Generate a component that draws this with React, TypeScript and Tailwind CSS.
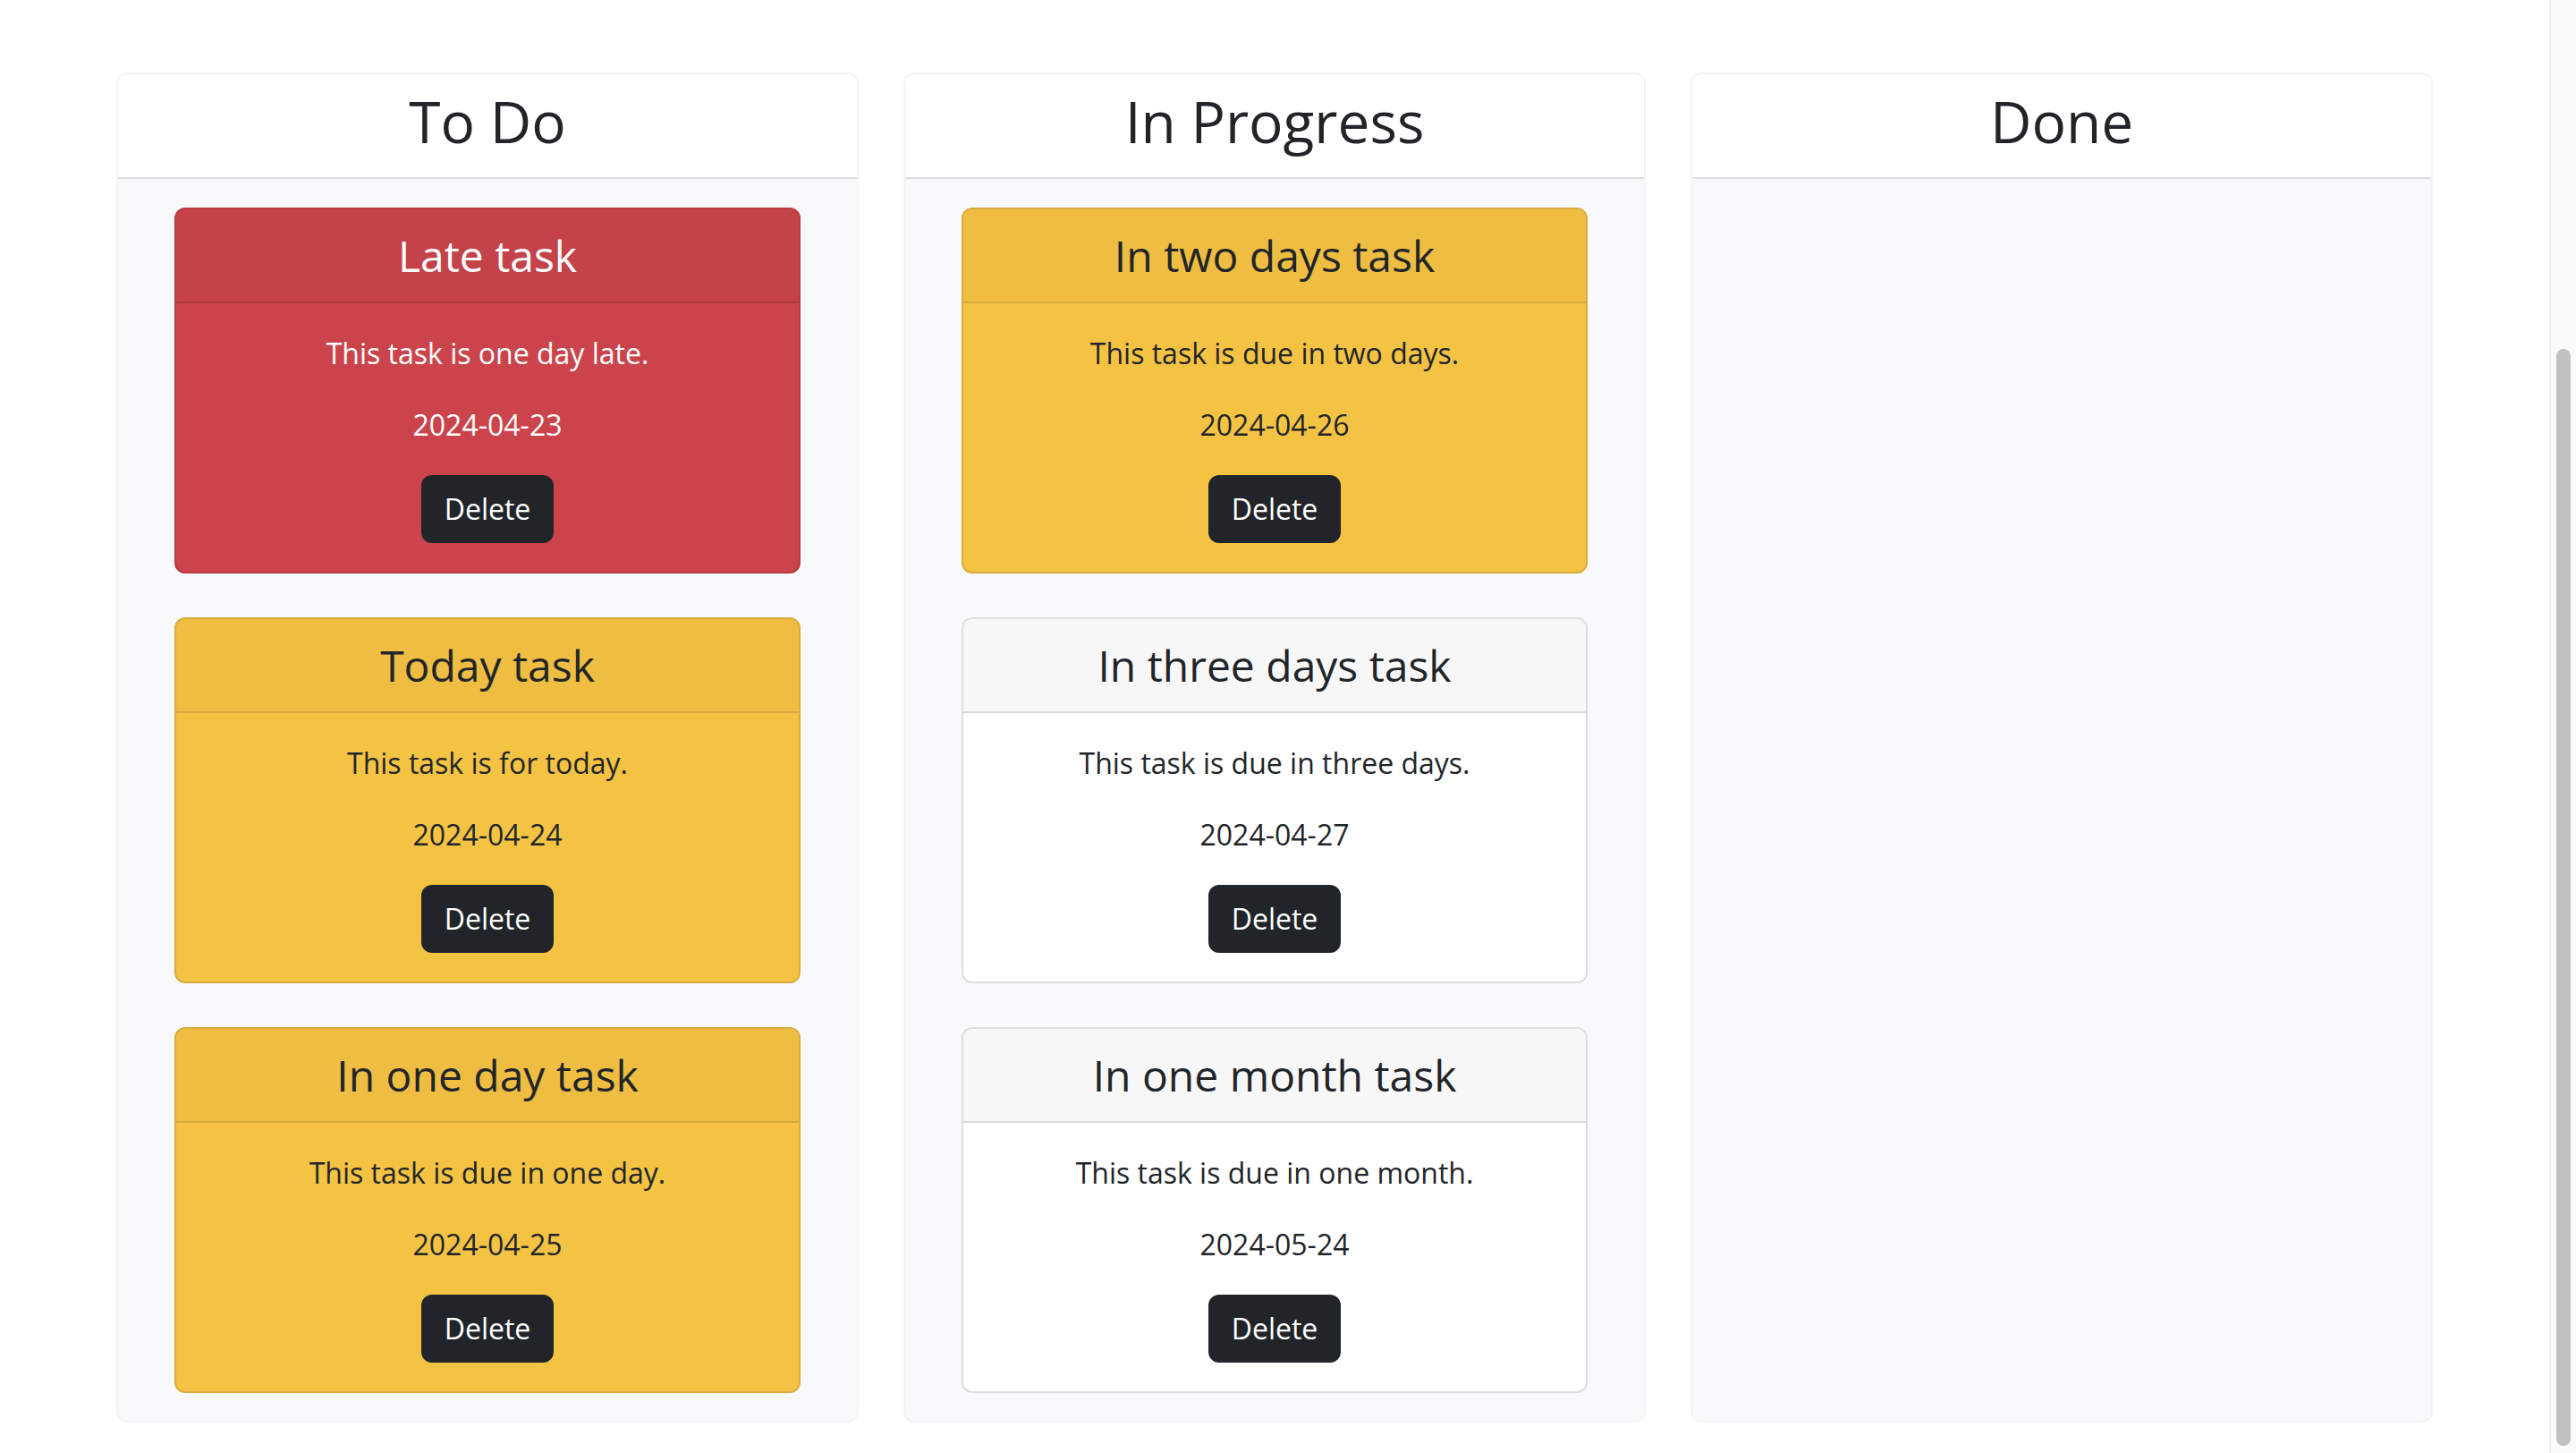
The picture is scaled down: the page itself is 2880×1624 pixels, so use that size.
import React from 'react';

type Tone = 'danger' | 'warning' | 'plain';

type Task = {
  id: number;
  title: string;
  description: string;
  date: string;
  tone: Tone;
};

const columns: { name: string; tasks: Task[] }[] = [
  {
    name: 'To Do',
    tasks: [
      { id: 1, title: 'Late task', description: 'This task is one day late.', date: '2024-04-23', tone: 'danger' },
      { id: 2, title: 'Today task', description: 'This task is for today.', date: '2024-04-24', tone: 'warning' },
      { id: 3, title: 'In one day task', description: 'This task is due in one day.', date: '2024-04-25', tone: 'warning' },
    ],
  },
  {
    name: 'In Progress',
    tasks: [
      { id: 4, title: 'In two days task', description: 'This task is due in two days.', date: '2024-04-26', tone: 'warning' },
      { id: 5, title: 'In three days task', description: 'This task is due in three days.', date: '2024-04-27', tone: 'plain' },
      { id: 6, title: 'In one month task', description: 'This task is due in one month.', date: '2024-05-24', tone: 'plain' },
    ],
  },
  { name: 'Done', tasks: [] },
];

const toneStyles: Record<Tone, { card: string; header: string }> = {
  danger: {
    card: 'bg-[#cb444b] border-[#b93a41] text-white',
    header: 'bg-[#c4424a] border-[#ae3a40]',
  },
  warning: {
    card: 'bg-[#f5c343] border-[#d8ab3c] text-[#212529]',
    header: 'bg-[#eebd41] border-[#d6a93b]',
  },
  plain: {
    card: 'bg-white border-[#dcddde] text-[#212529]',
    header: 'bg-[#f7f7f7] border-[#d9dadb]',
  },
};

function TaskCard({ task }: { task: Task }) {
  const s = toneStyles[task.tone];
  return (
    <div className={`border-2 rounded-[12px] overflow-hidden text-center ${s.card}`}>
      <div className={`border-b-2 pt-[23px] pb-[22px] ${s.header}`}>
        <h4 className="text-[48px] leading-[58px]">{task.title}</h4>
      </div>
      <div className="px-[32px] pt-[32px] pb-[32px]">
        <p className="text-[32px] leading-[48px] mb-[32px]">{task.description}</p>
        <p className="text-[32px] leading-[48px] mb-[32px]">{task.date}</p>
        <button className="bg-[#212529] border-2 border-[#212529] text-white text-[32px] leading-[48px] px-[24px] py-[12px] rounded-[12px]">
          Delete
        </button>
      </div>
    </div>
  );
}

export default function App() {
  return (
    <div
      className="flex h-[1624px] overflow-hidden bg-white text-[#212529]"
      style={{ fontFamily: '"Open Sans", "Noto Sans", sans-serif' }}
    >
      <main className="flex-1 pt-[81px]">
        <div className="mx-auto w-[2590px] grid grid-cols-3 gap-[50px]">
          {columns.map((col) => (
            <section
              key={col.name}
              className="border-2 border-[#f3f4f5] rounded-[12px] overflow-hidden flex flex-col bg-[#f8f9fa]"
            >
              <div className="bg-white border-b-2 border-[#dcdddf] pt-[14px] pb-[24px] text-center">
                <h2 className="text-[64px] leading-[77px]">{col.name}</h2>
              </div>
              <div className="flex-1 flex flex-col gap-[49px] px-[63px] pt-[32px] pb-[31px]">
                {col.tasks.map((t) => (
                  <TaskCard key={t.id} task={t} />
                ))}
              </div>
            </section>
          ))}
        </div>
      </main>

      {/* scrollbar */}
      <div className="w-[30px] flex flex-col border-l-2 border-[#ececec] bg-[#fafafa] pt-[390px] pb-[8px] px-[6px]">
        <div className="flex-1 rounded-full bg-[#c1c1c1]" />
      </div>
    </div>
  );
}
